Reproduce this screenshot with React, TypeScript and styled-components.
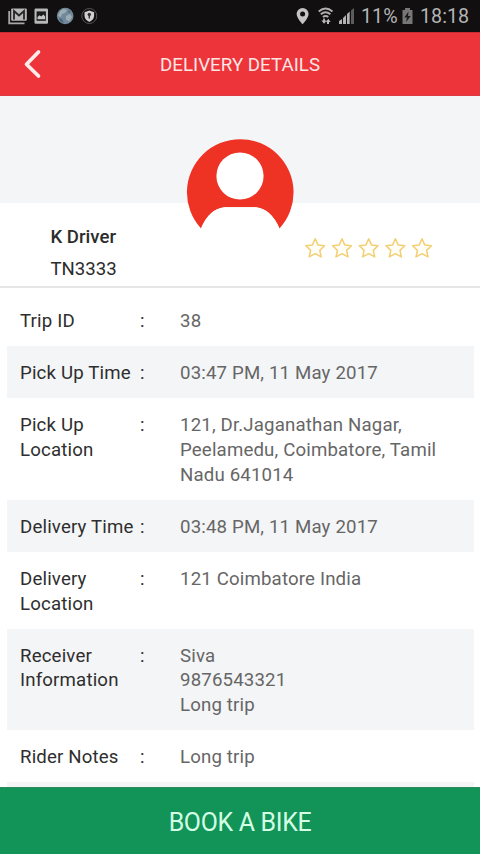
import React from "react";
import styled, { createGlobalStyle } from "styled-components";

const GlobalStyle = createGlobalStyle`
  * { box-sizing: border-box; }
  body { margin: 0; font-family: Roboto, sans-serif; background: #fff; }
`;

const Screen = styled.div`
  width: 480px;
  height: 854px;
  display: flex;
  flex-direction: column;
  overflow: hidden;
  background: #fff;
`;

const StatusBar = styled.div`
  height: 32px;
  flex: none;
  display: flex;
  justify-content: space-between;
  background: #110f10;
`;

const StatusIcons = styled.svg`
  display: block;
  height: 32px;
  flex: none;
`;

const StatusRight = styled.div`
  display: flex;
  align-items: center;
  width: 184px;
  color: #b4b4b4;
`;

const StatusText = styled.span<{ $width: number }>`
  width: ${(p) => p.$width}px;
  padding-top: 1px;
  font-size: 19.7px;
  line-height: 31px;
  white-space: nowrap;
`;

const Header = styled.header`
  height: 64px;
  flex: none;
  display: grid;
  grid-template-columns: 64px 1fr 64px;
  align-items: center;
  background: #ec343a;
  border-bottom: 1px solid #de3a41;
  border-top: 1px solid #c92c32;
`;

const BackButton = styled.button`
  border: 0;
  padding: 0;
  width: 64px;
  height: 62px;
  background: transparent;
  svg { display: block; }
`;

const Title = styled.h1`
  margin: 2px 0 0;
  font-size: 18.7px;
  font-weight: 400;
  line-height: 24px;
  letter-spacing: 0.04px;
  text-align: center;
  color: #ffe6e4;
`;

const Profile = styled.section`
  height: 192px;
  flex: none;
  display: grid;
  grid-template-columns: 180px 120px 180px;
  background: linear-gradient(#f4f5f7 107px, #fff 107px);
  border-bottom: 2px solid #e6e6e6;
`;

const Driver = styled.div`
  padding: 125px 0 0 50.5px;
  font-size: 18.6px;
  line-height: 32px;
  color: #2c2c2c;
`;

const DriverName = styled.div`
  font-weight: 500;
`;

const Avatar = styled.svg`
  display: block;
  width: 120px;
  height: 110px;
  margin-top: 36px;
`;

const Rating = styled.svg`
  display: block;
  width: 136px;
  height: 28px;
  margin-top: 138px;
`;

const Details = styled.dl`
  flex: 1;
  min-height: 0;
  overflow: hidden;
  margin: 0;
  padding: 6.4px 6.5px 0;
`;

const Row = styled.div<{ $shaded: boolean }>`
  display: grid;
  grid-template-columns: 120px 40px 270px;
  padding: 14.8px 0 12.4px 13.5px;
  font-size: 18.65px;
  line-height: 24.8px;
  letter-spacing: 0.16px;
  background: ${(p) => (p.$shaded ? "#f4f5f7" : "#fff")};
`;

const Label = styled.dt`
  color: #2e2e2e;
  white-space: pre-line;
`;

const Colon = styled.span`
  color: #2e2e2e;
`;

const Value = styled.dd`
  margin: 0;
  color: #666;
  white-space: pre-line;
`;

const BookButton = styled.button`
  height: 67px;
  flex: none;
  border: 0;
  border-top: 1px solid #2c8a5b;
  padding: 2px 0 0;
  background: #129358;
  color: #d5ffe5;
  font-family: inherit;
  font-size: 24.9px;
  letter-spacing: -0.3px;
`;

const rows: [string, string][] = [
  ["Trip ID", "38"],
  ["Pick Up Time", "03:47 PM, 11 May 2017"],
  ["Pick Up\nLocation", "121, Dr.Jaganathan Nagar,\nPeelamedu, Coimbatore, Tamil\nNadu 641014"],
  ["Delivery Time", "03:48 PM, 11 May 2017"],
  ["Delivery\nLocation", "121 Coimbatore India"],
  ["Receiver\nInformation", "Siva\n9876543321\nLong trip"],
  ["Rider Notes", "Long trip"],
  ["", ""],
];

const STAR = "M0-9.6 2.9-3.2 9.4-2.6 4.6 2.1 6 8.6 0 5.4-6 8.6-4.6 2.1-9.4-2.6-2.9-3.2Z";

function NotificationIcons() {
  return (
    <StatusIcons width="104" viewBox="0 0 104 32" fill="none">
      <path d="M9.2 11v12.3h15.3" stroke="#a8a8a8" strokeWidth="1.8" />
      <rect x="11.2" y="8.5" width="15.6" height="12.3" rx="1" fill="#b8b8b8" />
      <path d="M14 19.5V11l5 4.5 5-4.5v8.5" stroke="#252525" strokeWidth="1.8" />
      <rect x="34.5" y="8.5" width="13.5" height="15.3" rx="1.2" fill="#b8b8b8" />
      <rect x="36.6" y="11.4" width="9.3" height="9.4" fill="#1b1b1b" />
      <path d="M37.5 19.3v-2.4l2.1-1.7 1.6 1.4 2.2-2.2 1.8 2.2v2.7Z" fill="#c4c4c4" />
      <circle cx="65.2" cy="16" r="8.3" fill="#71899a" />
      <path d="M60 11.5c3-3 5.500-2.500 7-1l-2 2.500-3 1-1 3-3-1Z M66 16l4-2 2 3-3 4.500-3-2Z" fill="#9eacb3" />
      <path d="M59 18l3 1 2 4-4-2Z M68 10l3 2-2 1Z" fill="#486879" />
      <circle cx="89.300" cy="16" r="7.500" stroke="#555" strokeWidth="1" />
      <path d="M89.300 10.500l4.800 1.800v3.400c0 3-1.900 4.800-4.800 6.300-2.900-1.500-4.800-3.300-4.800-6.300v-3.400Z" fill="#d0d0d0" />
      <circle cx="89.300" cy="14.500" r="1.700" fill="#333" />
      <path d="M89.300 14.500v4" stroke="#333" strokeWidth="1.400" />
    </StatusIcons>
  );
}

function SignalIcons() {
  return (
    <StatusIcons width="65" viewBox="296 0 65 32" fill="none">
      <path fillRule="evenodd" d="M302.600 8a6 6 0 0 0-6 6c0 4.100 6 10.300 6 10.300s6-6.200 6-10.300a6 6 0 0 0-6-6Zm0 3.600a2.500 2.500 0 1 1 0 5 2.500 2.500 0 0 1 0-5Z" fill="#c4c4c4" />
      <g stroke="#b0b0b0" strokeWidth="1.800">
        <path d="M318.700 11.500c4.300-3.800 9.500-3.800 13.800 0M320.800 14.300c3-2.600 6.600-2.600 9.600 0M322.900 17c1.800-1.400 3.600-1.400 5.400 0" />
      </g>
      <path d="M323.200 18.500v2h-1.800l2.700 3.300 2.500-3.300h-1.700v-2ZM327 24v-2h-1.200l2.500-3.300 2.400 3.300H329v2Z" fill="#bbb" />
      <path d="M339 24v-3l3-2v5ZM343 24v-6l3-3v9ZM347 24V14l2.700-2.500V24Z" fill="#b4b4b4" />
      <path d="M351 24V10.500L354 8v16Z" fill="#5c5c5c" />
    </StatusIcons>
  );
}

export default function App() {
  return (
    <>
      <GlobalStyle />
      <Screen>
        <StatusBar>
          <NotificationIcons />
          <StatusRight>
            <SignalIcons />
            <StatusText $width={39}>11%</StatusText>
            <StatusIcons width="20" viewBox="400 0 20 32">
              <path d="M402.500 10h2.500V8h5v2h2.500v14h-10Z" fill="#777" />
              <path d="M408.500 11.500l-4.200 6h2.700l-1 4.500 4.800-6H408Z" fill="#1b1b1b" />
            </StatusIcons>
            <StatusText $width={60}>18:18</StatusText>
          </StatusRight>
        </StatusBar>
        <Header>
          <BackButton aria-label="Back">
            <svg width="64" height="62" viewBox="0 0 64 62" fill="none">
              <path d="M38.500 19 26.500 31.200 38.500 43" stroke="#ffecea" strokeWidth="3.700" strokeLinecap="round" strokeLinejoin="round" />
            </svg>
          </BackButton>
          <Title>DELIVERY DETAILS</Title>
        </Header>
        <Profile>
          <Driver>
            <DriverName>K Driver</DriverName>
            <div>TN3333</div>
          </Driver>
          <Avatar viewBox="180 132 120 110">
            <path d="M201 228.500A53.300 53.300 0 1 1 279.500 228.500Q271 209 256 207.300H224.500Q209 209 201 228.500Z" fill="#ee3224" />
            <path d="M201 228.500Q209 209 224.500 207.300H256Q271 209 279.500 228.500Z" fill="#fff" />
            <circle cx="240" cy="176" r="23.600" fill="#fff" />
          </Avatar>
          <Rating viewBox="300 234 136 28">
            {[315.2, 342, 368.700, 395.400, 422].map((x) => (
              <path key={x} d={STAR} transform={`translate(${x} 248.300)`} fill="#fffef8" stroke="#f3cf72" strokeWidth="1.500" strokeLinejoin="round" />
            ))}
          </Rating>
        </Profile>
        <Details>
          {rows.map(([label, value], i) => (
            <Row key={i} $shaded={i % 2 === 1}>
              <Label>{label}</Label>
              <Colon>{label && ":"}</Colon>
              <Value>{value}</Value>
            </Row>
          ))}
        </Details>
        <BookButton>BOOK A BIKE</BookButton>
      </Screen>
    </>
  );
}
